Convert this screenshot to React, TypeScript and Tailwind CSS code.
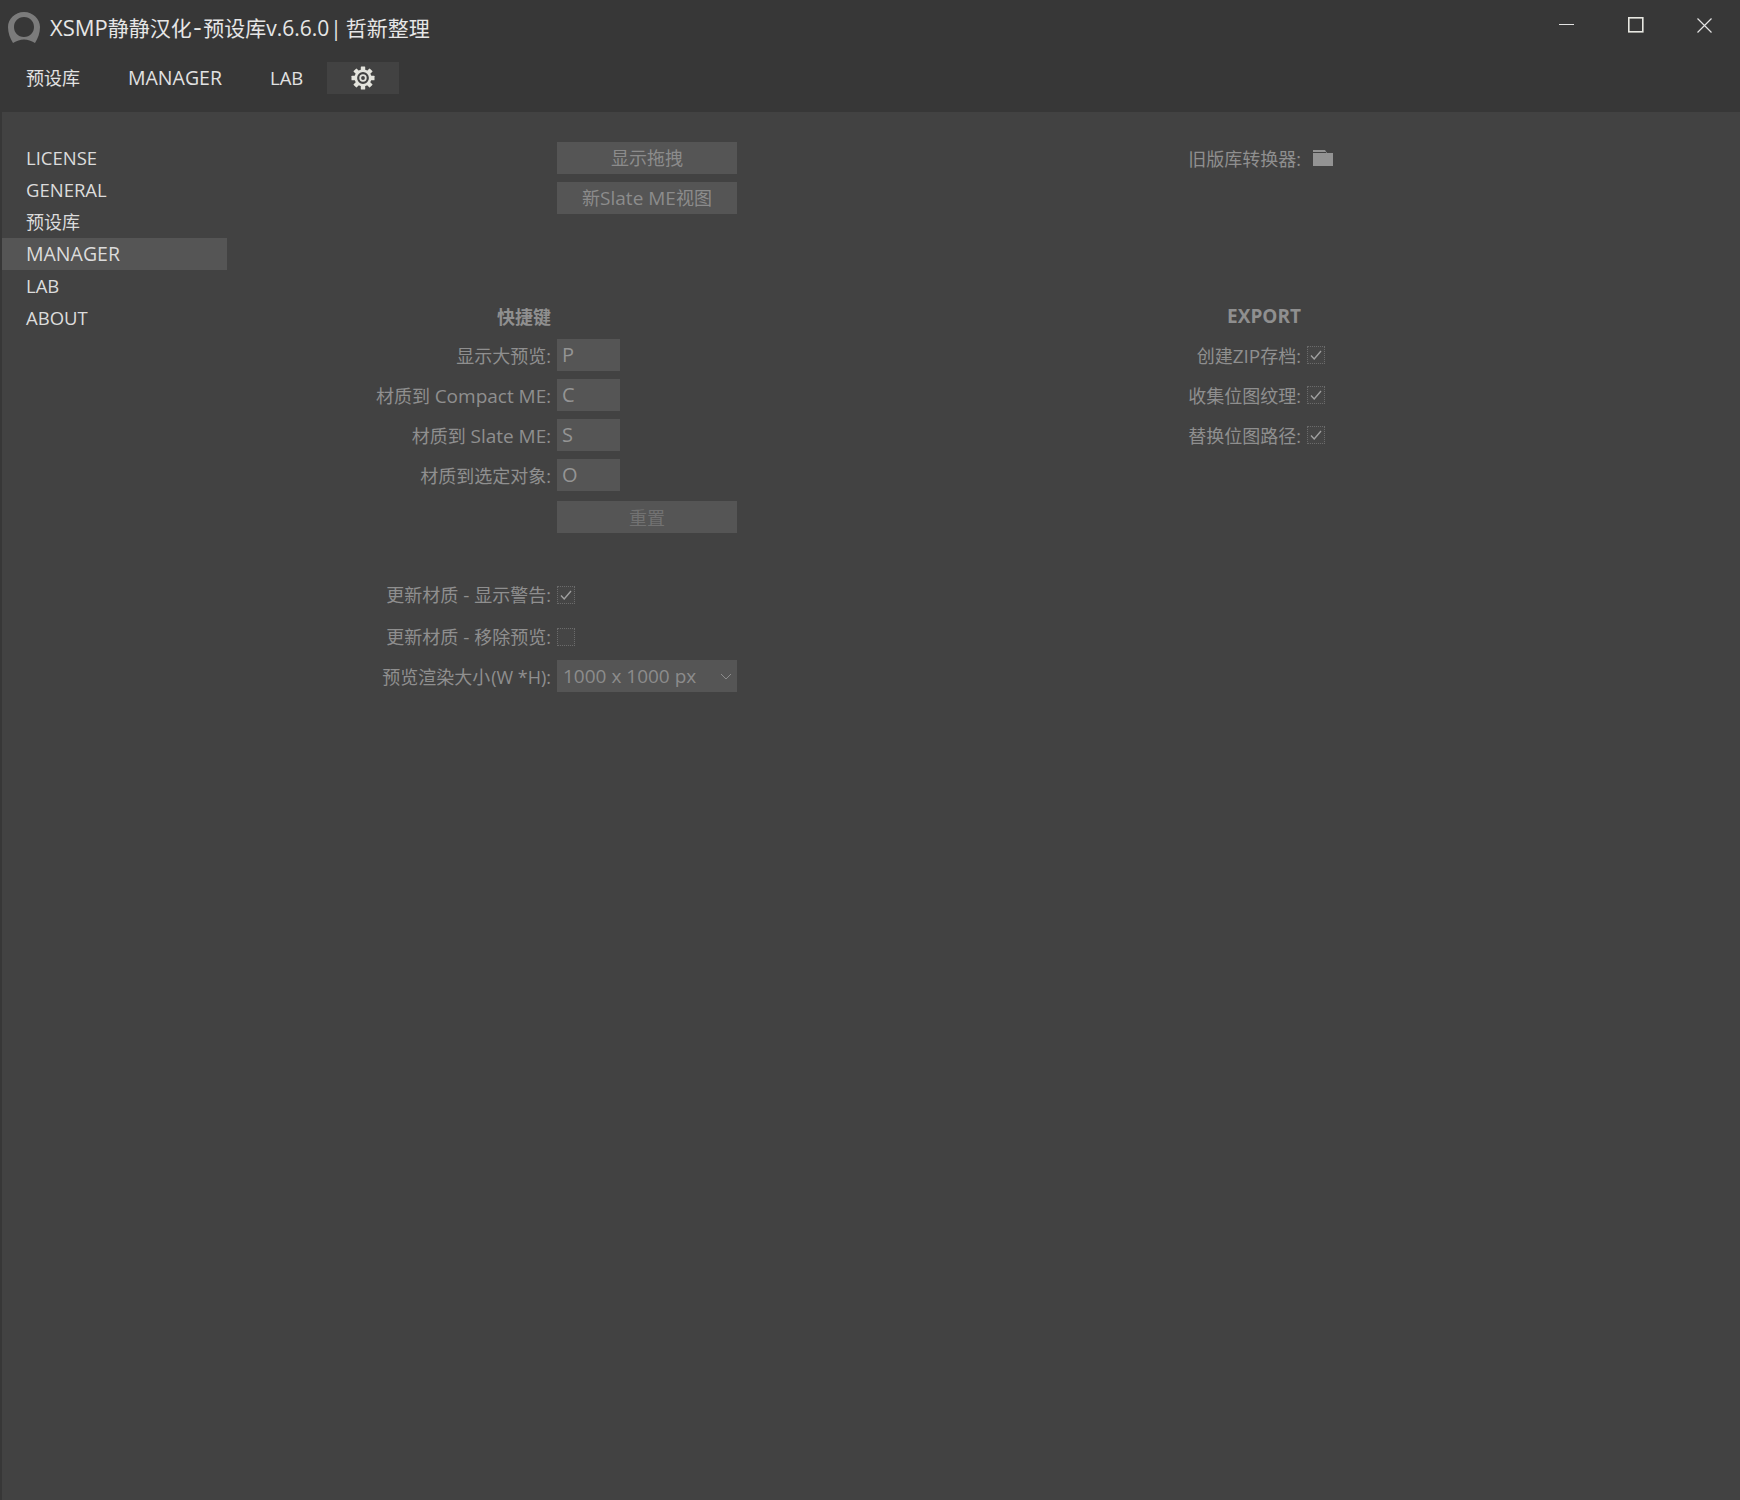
import React from "react";

const FONT = '"Open Sans", "Noto Sans CJK SC", sans-serif';

function L({ children }: { children: React.ReactNode }) {
  return <span className="text-[19px]">{children}</span>;
}

function Check({ on }: { on?: boolean }) {
  return (
    <span className="flex h-[18px] w-[18px] items-center justify-center border border-dotted border-[#6a6a6a] bg-[#454545]">
      {on && (
        <svg width="14" height="12" viewBox="0 0 14 12" fill="none" stroke="#a0a0a0" strokeWidth="1.4">
          <path d="M2 6.5 L5.2 10 L12 2" />
        </svg>
      )}
    </span>
  );
}

function Row({ label, children, className = "", tight }: { label?: React.ReactNode; children?: React.ReactNode; className?: string; tight?: boolean }) {
  return (
    <div className={`flex h-8 items-center ${className}`}>
      <span className={`w-[330px] whitespace-nowrap pr-[6px] text-right ${tight ? "" : "pt-[2px]"}`}>{label}</span>
      {children}
    </div>
  );
}

function Key({ k }: { k: string }) {
  return <span className="flex h-8 w-[63px] items-center bg-[#555555] pl-[5px] text-[20px] text-[#949494]">{k}</span>;
}

function Btn({ children, dim }: { children: React.ReactNode; dim?: boolean }) {
  return (
    <button className={`h-8 w-[180px] bg-[#555555] text-center ${dim ? "pt-[1px] text-[#727272]" : "text-[#8c8c8c]"}`}>
      {children}
    </button>
  );
}

function RightRow({ label, children, bold }: { label: React.ReactNode; children?: React.ReactNode; bold?: boolean }) {
  return (
    <div className="flex h-8 items-center">
      <span className={`w-[201px] whitespace-nowrap pr-[6px] pt-[2px] text-right ${bold ? "font-bold" : ""}`}>{label}</span>
      {children}
    </div>
  );
}

function Gear() {
  const teeth = [0, 45, 90, 135, 180, 225, 270, 315];
  return (
    <svg width="24" height="24" viewBox="0 0 24 24">
      {teeth.map((a) => (
        <rect key={a} x="9.8" y="0.5" width="4.4" height="5" rx="0.5" fill="#e3e3dc" transform={`rotate(${a} 12 12)`} />
      ))}
      <circle cx="12" cy="12" r="7.2" fill="none" stroke="#e3e3dc" strokeWidth="2.6" />
      <circle cx="12" cy="12" r="2.8" fill="none" stroke="#e3e3dc" strokeWidth="1.8" />
    </svg>
  );
}

function Logo() {
  return (
    <svg width="34" height="34" viewBox="0 0 34 34">
      <path
        fillRule="evenodd"
        fill="#7b7b7b"
        d="M17 1 C26 1 33 8 33 16 C33 22 31 27 28 32 C24 30 21 28.6 17 28.6 C13 28.6 10 30 6 32 C3 27 1 22 1 16 C1 8 8 1 17 1 Z M17 6 C11 6 7 10.5 7 16 C7 21.5 11 26 17 26 C23 26 27 21.5 27 16 C27 10.5 23 6 17 6 Z"
      />
    </svg>
  );
}

export default function App() {
  return (
    <div className="flex h-[1500px] w-[1740px] flex-col overflow-hidden bg-[#373737] text-[18px] leading-8" style={{ fontFamily: FONT }}>
      <header className="h-[112px] shrink-0 text-[#e2e2e2]">
        <div className="flex h-[56px] items-center">
          <span className="ml-[7px] mr-[9px] flex"><Logo /></span>
          <span className="-mt-[2px] whitespace-nowrap text-[21px] text-[#e6e6e6]">
            <span className="text-[22px]">XSMP</span>静静汉化<span className="mx-[1.5px] text-[26px]">-</span>预设库v.6.6.0<span className="ml-[1px] mr-[4px]">|</span>
            <span>哲新整理</span>
          </span>
          <div className="ml-auto flex h-full items-center pr-[28px] pb-[7px]">
            <svg width="16" height="16" viewBox="0 0 16 16" className="mr-[53px]" fill="none" stroke="#e2e2e2">
              <path d="M0 7.5 H15" />
            </svg>
            <svg width="16" height="16" viewBox="0 0 16 16" className="mr-[53px]" fill="none" stroke="#e8e8e2" strokeWidth="1.6">
              <rect x="0.8" y="0.8" width="14" height="14" />
            </svg>
            <svg width="15" height="15" viewBox="0 0 15 15" className="mt-[1px]" fill="none" stroke="#e2e2e2" strokeWidth="1.2">
              <path d="M0.5 0.5 L14.5 14.5 M14.5 0.5 L0.5 14.5" />
            </svg>
          </div>
        </div>
        <nav className="mt-[6px] flex h-8 items-center pl-[26px]">
          <span>预设库</span>
          <span className="ml-[48px] w-[94px] text-[19.5px]">MANAGER</span>
          <span className="ml-[48px] w-[34px] text-[18.5px]">LAB</span>
          <span className="ml-[23px] flex h-8 w-[72px] items-center justify-center bg-[#424242]"><Gear /></span>
        </nav>
      </header>

      <main className="ml-[2px] flex flex-1 bg-[#424242] pt-[30px] text-[#8f8f8f]">
        <aside className="w-[225px] shrink-0 text-[#dcdcdc]">
          {["LICENSE", "GENERAL", "预设库", "MANAGER", "LAB", "ABOUT"].map((s) => (
            <div key={s} className={`h-8 pl-6 ${s === "MANAGER" ? "bg-[#555555] text-[19.5px]" : s === "预设库" ? "" : "text-[18.5px]"}`}>
              {s}
            </div>
          ))}
        </aside>

        <section className="w-[516px] shrink-0">
          <Row><Btn>显示拖拽</Btn></Row>
          <Row className="mt-2"><Btn>新<L>Slate ME</L>视图</Btn></Row>
          <div className="mt-[85px] h-8 w-[330px] pr-[6px] pt-[2px] text-right font-bold">快捷键</div>
          <Row className="mt-2" label="显示大预览:"><Key k="P" /></Row>
          <Row className="mt-2" label={<>材质到 <L>Compact ME</L>:</>}><Key k="C" /></Row>
          <Row className="mt-2" label={<>材质到 <L>Slate ME</L>:</>}><Key k="S" /></Row>
          <Row className="mt-2" label="材质到选定对象:"><Key k="O" /></Row>
          <Row className="mt-[10px]"><Btn dim>重置</Btn></Row>
          <Row className="mt-[46px]" tight label={<>更新材质<L> - </L>显示警告:</>}><Check on /></Row>
          <Row className="mt-[10px]" tight label={<>更新材质<L> - </L>移除预览:</>}><Check /></Row>
          <Row className="mt-[7px]" label={<>预览渲染大小<span className="ml-[1px]">(W *H)</span>:</>}>
            <div className="flex h-8 w-[180px] items-center justify-between bg-[#555555] pl-[6px] pr-[4px] text-[#8c8c8c]">
              <L>1000 x 1000 px</L>
              <svg width="14" height="14" viewBox="0 0 14 14" fill="none" stroke="#8c8c8c" strokeWidth="1">
                <path d="M2 5 L7 10 L12 5" />
              </svg>
            </div>
          </Row>
        </section>

        <section className="ml-[363px] w-[300px]">
          <RightRow label="旧版库转换器:">
            <svg width="20" height="16" viewBox="0 0 20 16" className="ml-[6px]">
              <path fill="#939393" d="M0 0 H12 L14 3 H20 V16 H0 Z" />
              <path stroke="#424242" strokeWidth="1" d="M0 2.5 H13" />
            </svg>
          </RightRow>
          <div className="mt-[125px]"><RightRow label={<L>EXPORT</L>} bold /></div>
          <div className="mt-2"><RightRow label={<>创建<L>ZIP</L>存档:</>}><Check on /></RightRow></div>
          <div className="mt-2"><RightRow label="收集位图纹理:"><Check on /></RightRow></div>
          <div className="mt-2"><RightRow label="替换位图路径:"><Check on /></RightRow></div>
        </section>
      </main>
    </div>
  );
}
